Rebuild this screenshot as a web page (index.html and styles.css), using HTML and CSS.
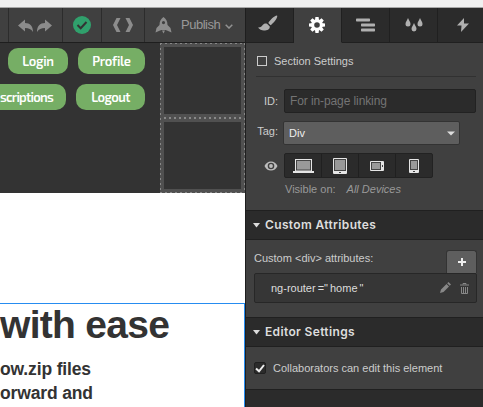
FILE: index.html
```
<!DOCTYPE html>
<html lang="en">
<head>
<meta charset="utf-8">
<title>Designer</title>
<link rel="stylesheet" href="styles.css">
</head>
<body>
<div class="chrome"></div>
<div class="app">
  <main class="stage">
    <nav class="toolbar">
      <span class="tool edge"></span>
      <span class="tool history">
        <svg width="53" height="34" viewBox="9 8 53 34"><path d="M18 25.500L25 19.500V23C30 23 33 26 33 32C31 29 29 28 25 28V31.500Z M52 25.500L45 19.500V23C40 23 37 26 37 32C39 29 41 28 45 28V31.500Z"/></svg>
      </span>
      <span class="tool status"><svg width="38" height="34" viewBox="63 8 38 34"><circle cx="82" cy="25" r="9" fill="#30a06c"/><path d="M77.500 25L80.700 28.200L86.500 22" fill="none" stroke="#333" stroke-width="2"/></svg></span>
      <span class="tool code"><svg width="42" height="34" viewBox="102 8 42 34"><path d="M116.500 18H120.500L117 25L120.500 32H116.500L113 25ZM125.500 18H129.500L133 25L129.500 32H125.500L129 25Z"/></svg></span>
      <span class="tool publish">
        <svg class="rocket" width="17" height="17" viewBox="0 0 17 17"><path fill-rule="evenodd" d="M8.500 0C11 2 12.500 4 12.500 8L15.500 11L16.500 15.500L12 13.500L10.500 13H6.500L5 13.500L.5 15.500L1.500 11L4.500 8C4.500 4 6 2 8.500 0ZM8.500 4A1.600 1.600 0 1 0 8.500 7.200A1.600 1.600 0 1 0 8.500 4ZM7 13.500H10L8.500 16.500Z"/></svg>
        <span>Publish</span>
        <svg class="chev" width="8" height="5" viewBox="0 0 8 5"><path d="M.7.700L4 4L7.300.700" fill="none" stroke="#929292" stroke-width="1.500"/></svg>
      </span>
    </nav>
    <header class="site-header">
      <div class="links">
        <div class="link-row"><a class="login">Login</a><a class="profile">Profile</a></div>
        <div class="link-row"><a class="subs">scriptions</a><a class="logout">Logout</a></div>
      </div>
      <div class="cells"><i></i><div class="dots"></div><i></i></div>
    </header>
    <section class="hero">
      <div class="selected">
        <h1>with ease</h1>
        <p>ow.zip files<br>orward and</p>
      </div>
    </section>
  </main>
  <aside class="panel">
    <div class="tabs">
      <span class="tab"><svg width="20" height="17" viewBox="0 0 20 17"><path d="M19 .5C16 1 12 5 10.300 8L12.500 10.200C15.500 8 19 4 19.300.900ZM9.300 9L11.800 11.500C12 14.500 9 15.500 6 15.500C3.500 15.500 1.500 14.500 0 12.500C3 12.600 3.600 11.500 4.500 10.300C5.800 8.600 7.700 8 9.300 9Z"/></svg></span>
      <span class="tab active"><svg width="16" height="16" viewBox="-8 -8 16 16"><g fill="#fff"><path d="M-1.600-8H1.600L2.100-4H-2.100ZM-1.600 8H1.600L2.100 4H-2.100Z"/><path transform="rotate(45)" d="M-1.600-8H1.600L2.100-4H-2.100ZM-1.600 8H1.600L2.100 4H-2.100Z"/><path transform="rotate(90)" d="M-1.600-8H1.600L2.100-4H-2.100ZM-1.600 8H1.600L2.100 4H-2.100Z"/><path transform="rotate(135)" d="M-1.600-8H1.600L2.100-4H-2.100ZM-1.600 8H1.600L2.100 4H-2.100Z"/></g><circle r="4.300" fill="none" stroke="#fff" stroke-width="3"/></svg></span>
      <span class="tab"><svg width="20" height="14" viewBox="0 0 20 14"><rect y="0.500" width="14" height="3" rx=".7"/><rect x="5" y="5.500" width="14" height="3" rx=".7"/><rect x="5" y="10.500" width="14" height="3" rx=".7"/></svg></span>
      <span class="tab"><svg width="18" height="14" viewBox="0 0 18 14"><path d="M3 0C4 2.500 5.500 4 5.500 6A2.500 2.500 0 0 1 .5 6C.5 4 2 2.500 3 0ZM15 0C16 2.500 17.500 4 17.500 6A2.500 2.500 0 0 1 12.500 6C12.500 4 14 2.500 15 0ZM9 5C10 7.500 11.500 9 11.500 11A2.500 2.500 0 0 1 6.500 11C6.500 9 8 7.500 9 5Z"/></svg></span>
      <span class="tab bolt"><svg width="12" height="14" viewBox="0 0 12 14"><path d="M7 0L0 7.500H4.500L4 14L12 5.500H7Z"/></svg></span>
    </div>
    <div class="section-settings"><span class="box"></span><span>Section Settings</span></div>
    <div class="fields">
      <label>ID:</label><div class="input">For in-page linking</div>
      <label class="tag">Tag:</label><div class="select"><span>Div</span><svg width="8" height="5" viewBox="0 0 8 5"><path fill="#ddd" d="M0 .5H8L4 4.500Z"/></svg></div>
      <label class="eye"><svg width="14" height="10" viewBox="0 0 14 10"><path fill="#bdbdbd" fill-rule="evenodd" d="M7 .5C10 .5 12 2 13.500 5C12 8 10 9.500 7 9.500S2 8 .5 5C2 2 4 .5 7 .5ZM7 1.700A3.300 3.300 0 1 0 7 8.300A3.300 3.300 0 1 0 7 1.700Z"/><circle cx="7" cy="5" r="1.900" fill="#bdbdbd"/></svg></label>
      <div class="devices">
        <span><svg width="21" height="14" viewBox="0 0 21 14"><path fill="#e6e6e6" d="M2 0H19V12H21V14H0V12H2Z"/><rect x="3.500" y="1.500" width="14" height="9.500" fill="#999" stroke="#444"/></svg></span>
        <span><svg width="14" height="16" viewBox="0 0 14 16"><rect width="14" height="16" rx="1" fill="#e6e6e6"/><rect x="1.500" y="1.500" width="11" height="11" fill="#999" stroke="#444"/><rect x="6" y="14" width="2" height="1" fill="#444"/></svg></span>
        <span><svg width="14" height="10" viewBox="0 0 14 10"><rect width="14" height="10" rx="1" fill="#e6e6e6"/><rect x="1.500" y="1.500" width="9" height="7" fill="#999" stroke="#444"/><rect x="12" y="4" width="1" height="2" fill="#444"/></svg></span>
        <span><svg width="10" height="14" viewBox="0 0 10 14"><rect width="10" height="14" rx="1" fill="#e6e6e6"/><rect x="1.500" y="1.500" width="7" height="9" fill="#999" stroke="#444"/><rect x="4" y="12" width="2" height="1" fill="#444"/></svg></span>
      </div>
    </div>
    <div class="visible"><span>Visible on:</span><em>All Devices</em></div>
    <h2><svg width="7" height="5" viewBox="0 0 7 5"><path d="M0 0H7L3.500 4.500Z"/></svg><span>Custom Attributes</span></h2>
    <div class="attributes">
      <div class="attr-head"><span>Custom &lt;div&gt; attributes:</span><span class="add"><svg width="8" height="8" viewBox="0 0 8 8"><path fill="#eee" d="M3 0H5V3H8V5H5V8H3V5H0V3H3Z"/></svg></span></div>
      <div class="attr"><span class="pair">ng-router<b>="</b>home<b class="q">"</b></span>
        <svg class="pencil" width="11" height="11" viewBox="0 0 11 11"><path d="M0 11L1 7.500L6.500 2L9 4.500L3.500 10ZM7.200 1.300L8.500 0L11 2.500L9.700 3.800Z"/></svg>
        <svg class="trash" width="9" height="11" viewBox="0 0 9 11"><path d="M3 1.500V.5H6V1.500M0 2H9M1.500 4V10.500H7.500V4M3.500 4V10M5.500 4V10" fill="none" stroke="#888"/></svg>
      </div>
    </div>
    <h2><svg width="7" height="5" viewBox="0 0 7 5"><path d="M0 0H7L3.500 4.500Z"/></svg><span>Editor Settings</span></h2>
    <div class="collab"><span class="check"><svg width="10" height="9" viewBox="0 0 10 9"><path d="M1 4.500L4 7.300L9 1" fill="none" stroke="#eee" stroke-width="2"/></svg></span><span>Collaborators can edit this element</span></div>
    <div class="rest"></div>
  </aside>
</div>
</body>
</html>
```
FILE: styles.css
```
* { box-sizing: border-box; }
body { margin: 0; width: 483px; height: 407px; overflow: hidden; font: 11px/14px "Liberation Sans", Arial, sans-serif; color: #ccc; }
svg { display: block; flex: none; }
span, label, a, em { white-space: nowrap; }
.chrome { height: 8px; background: #f0f0f0; border-bottom: 1px solid #a8a8a8; }
.app { display: flex; height: 399px; }
.stage { width: 245px; height: 399px; overflow: hidden; background: #fff; }
.toolbar { display: flex; height: 35px; background: #404040; border-bottom: 1px solid #1e1e1e; fill: #8c8c8c; }
.tool { border-right: 1px solid #2c2c2c; flex: none; }
.edge { width: 9px; }
.history { width: 54px; }
.status { width: 39px; }
.code { width: 43px; }
.publish { width: 100px; border: 0; display: flex; align-items: center; padding-left: 10px; font-size: 13px; color: #999; }
.publish span { margin: 0 5px 0 9px; width: 39px; letter-spacing: -.5px; }
.chev { margin-top: 2px; }
.site-header { display: flex; height: 150px; background: #333; }
.links { width: 160px; padding: 5px 15px 0 0; overflow: hidden; }
.link-row { display: flex; justify-content: flex-end; gap: 10px; margin-bottom: 10px; }
.link-row a { height: 26px; border-radius: 10px; background: #76ae65; color: #fff; font: 600 13px/26px "Exo 2", "Open Sans", sans-serif; letter-spacing: -.3px; text-align: center; flex: none; }
.login { width: 60px; }
.profile { width: 67px; }
.link-row .subs { width: 66px; padding-right: 14px; border-radius: 0 10px 10px 0; text-align: right; letter-spacing: -.75px; }
.link-row .logout { width: 69px; letter-spacing: -.6px; }
.cells { width: 85px; padding: 4px; background:
  repeating-linear-gradient(90deg, #888 0 2px, transparent 2px 5px) 0 0 / 100% 1px no-repeat,
  repeating-linear-gradient(90deg, #888 0 2px, transparent 2px 5px) 0 100% / 100% 1px no-repeat,
  repeating-linear-gradient(#888 0 2px, transparent 2px 5px) 0 0 / 1px 100% no-repeat,
  repeating-linear-gradient(#888 0 2px, transparent 2px 5px) 100% 0 / 1px 100% no-repeat,
  #505050; }
.cells i { display: block; height: 67px; background: #333; }
.dots { height: 2px; margin: 3px 0; background: repeating-linear-gradient(90deg, #888 0 2px, transparent 2px 5px); }
.hero { padding-top: 110px; height: 214px; }
.selected { height: 110px; border: 1px solid #268cf0; border-left: 0; color: #333; font-weight: bold; }
h1 { margin: 1px 0 0; font-size: 39px; line-height: 40px; letter-spacing: -.7px; white-space: nowrap; }
.selected p { margin: 12px 0 0; font-size: 17.500px; line-height: 24px; letter-spacing: -.15px; }
.panel { width: 238px; border-left: 1px solid #1e1e1e; background: #404040; display: flex; flex-direction: column; }
.tabs { display: flex; height: 35px; flex: none; fill: #b0b0b0; }
.tab { width: 48px; flex: none; display: flex; justify-content: center; align-items: center; background: #2b2b2b; border-right: 1px solid #202020; border-bottom: 1px solid #202020; }
.tab:first-child { padding: 0 4px 3px 0; }
.tab.active { background: #404040; border-bottom-color: #404040; width: 48px; padding-right: 1px; }
.tab.bolt { width: 46px; padding: 0 0 1px 3px; border-right: 0; }
.section-settings { display: flex; align-items: center; gap: 7px; height: 34px; margin: 0 7px 12px 10px; padding: 3px 0 0 1px; border-bottom: 1px solid #313131; flex: none; }
.box { width: 10px; height: 10px; border: 1px solid #ccc; }
.fields { display: grid; grid-template-columns: 32px 193px; column-gap: 5px; grid-template-rows: 24px 24px 25px; row-gap: 8px; flex: none; }
.fields label { text-align: right; align-self: center; }
.fields .tag { margin-top: -4px; }
.fields .eye { justify-self: end; }
.input, .select { display: flex; align-items: center; padding-left: 5px; border: 1px solid #222; border-radius: 2px; font-size: 12px; }
.input { margin-left: 1px; background: #2b2b2b; color: #747474; letter-spacing: -.1px; }
.select { width: 177px; background: #5e5e5e; border-color: #333; color: #eee; font-size: 11px; justify-content: space-between; padding-right: 4px; }
.devices { display: flex; width: 149px; margin-left: 1px; background: #2b2b2b; border: 1px solid #222; border-radius: 2px; }
.devices span { flex: 1; display: flex; align-items: center; justify-content: center; border-right: 1px solid #202020; }
.devices span:last-child { border: 0; }
.visible { display: flex; gap: 11px; margin: 4px 0 0 39px; height: 14px; color: #999; flex: none; }
h2 { display: flex; align-items: center; gap: 5px; margin: 14px 0 0; height: 30px; padding-left: 7px; border: 1px solid #202020; border-width: 1px 0; background: #2b2b2b; fill: #ddd; color: #ddd; font: 600 12px/16px Inter, sans-serif; letter-spacing: .35px; flex: none; }
.attributes { margin: 10px 6px 0 8px; flex: none; }
.attr-head { display: flex; justify-content: space-between; height: 23px; line-height: 17px; }
.add { width: 31px; display: flex; align-items: center; justify-content: center; background: #5e5e5e; border: 1px solid #333; border-bottom: 0; border-radius: 3px 3px 0 0; }
.attr { display: flex; align-items: center; height: 30px; padding: 0 7px 0 16px; background: #363636; border: 1px solid #272727; border-radius: 2px; fill: #888; }
.pair { flex: 1; color: #ddd; }
.pair b { font-weight: normal; margin: 0 2px; }
.pair .q { margin: 0 0 0 2px; }
.pencil { margin-top: -2px; }
.trash { margin-left: 9px; }
.collab { display: flex; align-items: center; gap: 7px; height: 42px; padding-left: 8px; flex: none; }
.check { width: 12px; height: 12px; display: flex; align-items: center; justify-content: center; background: #2b2b2b; border: 1px solid #202020; border-radius: 2px; }
.rest { flex: 1; background: #2b2b2b; border-top: 1px solid #202020; }
```
